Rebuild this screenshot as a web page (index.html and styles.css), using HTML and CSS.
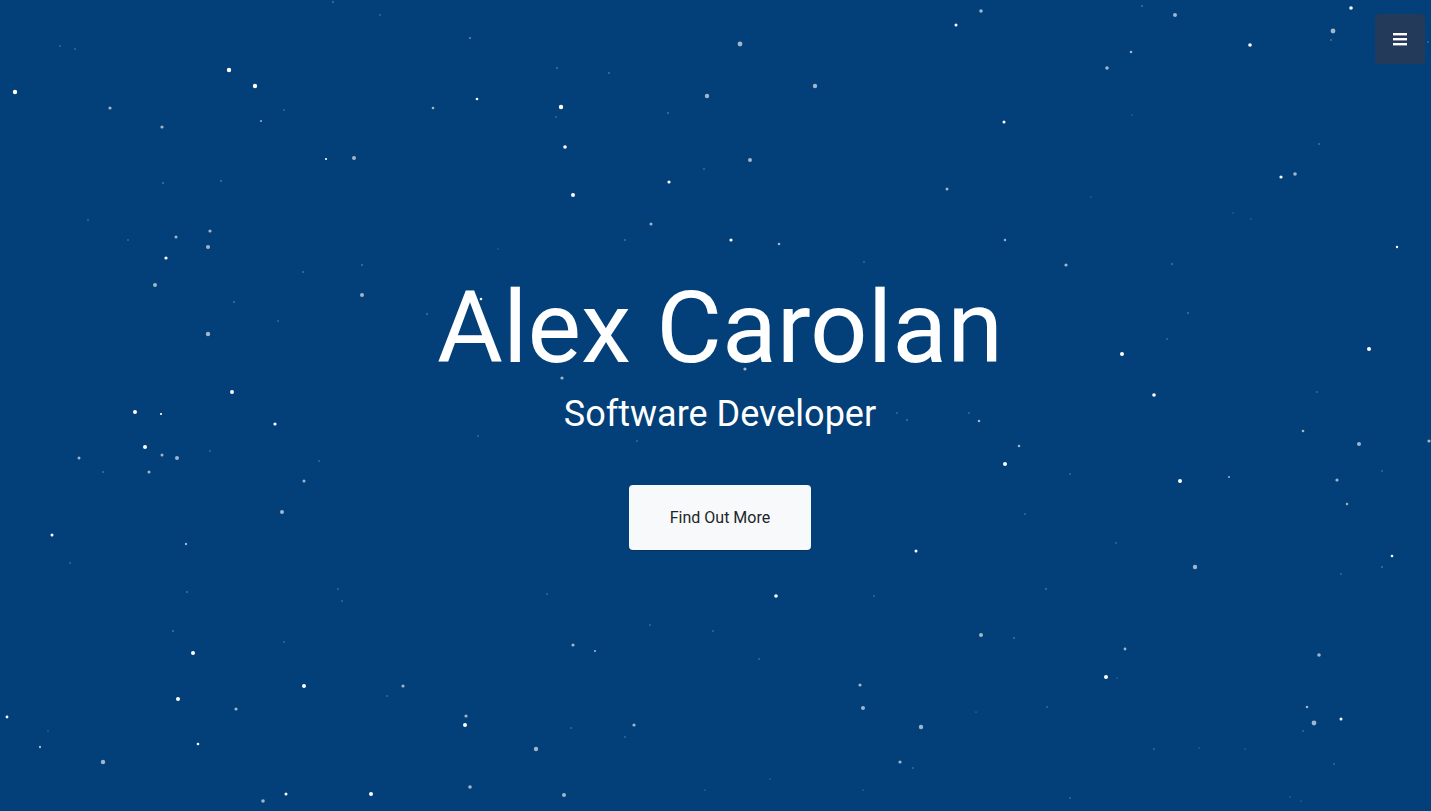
FILE: index.html
```html
<!DOCTYPE html>
<html lang="en">
<head>
<meta charset="utf-8">
<title>Alex Carolan</title>
<link rel="stylesheet" href="styles.css">
</head>
<body>
<header class="hero">
  <svg class="stars" viewBox="0 0 1431 811" width="1431" height="811" aria-hidden="true">
    <g class="bright">
      <circle cx="229" cy="70" r="2.2"/><circle cx="255" cy="86" r="2.2"/><circle cx="326" cy="159" r="1.1"/>
      <circle cx="166" cy="258" r="1.6"/><circle cx="477" cy="99" r="1.3"/><circle cx="561" cy="107" r="2.2"/>
      <circle cx="565" cy="147" r="1.8"/><circle cx="573" cy="195" r="2"/><circle cx="669" cy="182" r="1.6"/>
      <circle cx="731" cy="240" r="1.6"/><circle cx="956" cy="25" r="1.5"/><circle cx="1250" cy="45" r="1.8"/>
      <circle cx="1351" cy="8" r="1.8"/><circle cx="1004" cy="122" r="1.5"/><circle cx="1281" cy="177" r="1.6"/>
      <circle cx="1397" cy="247" r="1.2"/><circle cx="232" cy="392" r="2"/><circle cx="135" cy="412" r="2"/>
      <circle cx="275" cy="424" r="1.6"/><circle cx="145" cy="447" r="2"/><circle cx="52" cy="535" r="1.5"/>
      <circle cx="481" cy="299" r="1.3"/><circle cx="1122" cy="354" r="2"/><circle cx="1154" cy="395" r="1.8"/>
      <circle cx="1369" cy="349" r="2"/><circle cx="1005" cy="464" r="2"/><circle cx="1180" cy="481" r="2"/>
      <circle cx="193" cy="653" r="2"/><circle cx="304" cy="686" r="2"/><circle cx="178" cy="699" r="2"/>
      <circle cx="7" cy="717" r="1.4"/><circle cx="198" cy="744" r="1.3"/><circle cx="286" cy="794" r="1.5"/>
      <circle cx="371" cy="794" r="2"/><circle cx="465" cy="725" r="2"/><circle cx="916" cy="551" r="1.5"/>
      <circle cx="776" cy="596" r="1.8"/><circle cx="1392" cy="556" r="1.3"/><circle cx="1106" cy="677" r="2"/>
      <circle cx="1341" cy="719" r="1.5"/><circle cx="161" cy="414" r="1.1"/><circle cx="15" cy="92" r="2.2"/>
    </g>
    <g class="dim">
      <circle cx="110" cy="108" r="1.6"/><circle cx="162" cy="127" r="1.6"/><circle cx="261" cy="121" r="1"/>
      <circle cx="354" cy="158" r="2"/><circle cx="210" cy="231" r="1.6"/><circle cx="176" cy="237" r="1.5"/>
      <circle cx="208" cy="247" r="2"/><circle cx="433" cy="108" r="1.3"/><circle cx="740" cy="44" r="2.4"/>
      <circle cx="815" cy="86" r="2.2"/><circle cx="707" cy="96" r="2.2"/><circle cx="750" cy="160" r="2"/>
      <circle cx="651" cy="224" r="1.5"/><circle cx="779" cy="244" r="1.3"/><circle cx="947" cy="189" r="1.5"/>
      <circle cx="981" cy="11" r="1.8"/><circle cx="1175" cy="15" r="2"/><circle cx="1131" cy="52" r="1.3"/>
      <circle cx="1107" cy="68" r="1.8"/><circle cx="1333" cy="31" r="2.4"/><circle cx="1295" cy="174" r="1.8"/>
      <circle cx="1005" cy="240" r="1.2"/><circle cx="1066" cy="265" r="1.6"/><circle cx="155" cy="285" r="2"/>
      <circle cx="362" cy="295" r="2"/><circle cx="208" cy="334" r="2.2"/><circle cx="162" cy="455" r="1.5"/>
      <circle cx="177" cy="458" r="2"/><circle cx="79" cy="458" r="1.5"/><circle cx="149" cy="472" r="1.5"/>
      <circle cx="304" cy="481" r="1.5"/><circle cx="282" cy="512" r="2"/><circle cx="562" cy="378" r="1.6"/>
      <circle cx="745" cy="369" r="1.6"/><circle cx="979" cy="421" r="1.3"/><circle cx="1019" cy="446" r="1.3"/>
      <circle cx="1303" cy="431" r="1.3"/><circle cx="1359" cy="444" r="2"/><circle cx="1429" cy="441" r="1.6"/>
      <circle cx="1337" cy="480" r="1.6"/><circle cx="1347" cy="504" r="1.2"/><circle cx="236" cy="709" r="1.6"/>
      <circle cx="403" cy="686" r="1.6"/><circle cx="103" cy="762" r="2.2"/><circle cx="466" cy="716" r="1.6"/>
      <circle cx="263" cy="801" r="1.8"/><circle cx="470" cy="787" r="1.8"/><circle cx="573" cy="645" r="1.6"/>
      <circle cx="595" cy="651" r="1.1"/><circle cx="860" cy="685" r="1.6"/><circle cx="863" cy="708" r="2"/>
      <circle cx="921" cy="727" r="2.2"/><circle cx="900" cy="762" r="1.6"/><circle cx="634" cy="725" r="1.6"/>
      <circle cx="536" cy="749" r="2.2"/><circle cx="564" cy="795" r="2"/><circle cx="1195" cy="567" r="2.2"/>
      <circle cx="981" cy="635" r="2"/><circle cx="1125" cy="649" r="1.4"/><circle cx="1319" cy="655" r="1.8"/>
      <circle cx="1314" cy="723" r="2.4"/><circle cx="1307" cy="707" r="1.3"/><circle cx="40" cy="747" r="1.2"/>
      <circle cx="186" cy="544" r="1.2"/><circle cx="1229" cy="477" r="1"/>
    </g>
    <g class="faint">
      <circle cx="221" cy="181" r="0.8"/><circle cx="163" cy="183" r="0.8"/><circle cx="128" cy="240" r="0.7"/>
      <circle cx="88" cy="220" r="0.7"/><circle cx="470" cy="38" r="0.9"/><circle cx="284" cy="110" r="0.7"/>
      <circle cx="60" cy="46" r="0.7"/><circle cx="75" cy="49" r="0.7"/><circle cx="333" cy="2" r="0.8"/>
      <circle cx="380" cy="15" r="0.7"/><circle cx="362" cy="265" r="0.8"/><circle cx="303" cy="272" r="0.8"/>
      <circle cx="557" cy="68" r="0.8"/><circle cx="609" cy="73" r="0.8"/><circle cx="668" cy="113" r="0.8"/>
      <circle cx="556" cy="117" r="0.7"/><circle cx="704" cy="169" r="0.7"/><circle cx="625" cy="240" r="0.8"/>
      <circle cx="498" cy="249" r="0.6"/><circle cx="864" cy="262" r="0.7"/><circle cx="1142" cy="6" r="0.8"/>
      <circle cx="1331" cy="40" r="0.8"/><circle cx="1132" cy="115" r="0.6"/><circle cx="1319" cy="144" r="0.8"/>
      <circle cx="1172" cy="264" r="0.8"/><circle cx="1091" cy="197" r="0.6"/><circle cx="1233" cy="213" r="0.6"/>
      <circle cx="1251" cy="219" r="0.6"/><circle cx="234" cy="302" r="0.8"/><circle cx="278" cy="321" r="0.7"/>
      <circle cx="103" cy="472" r="0.8"/><circle cx="210" cy="451" r="0.7"/><circle cx="319" cy="461" r="0.7"/>
      <circle cx="427" cy="314" r="0.8"/><circle cx="478" cy="436" r="0.7"/><circle cx="637" cy="441" r="0.7"/>
      <circle cx="671" cy="416" r="0.8"/><circle cx="897" cy="413" r="0.7"/><circle cx="907" cy="420" r="0.8"/>
      <circle cx="1188" cy="313" r="0.8"/><circle cx="1167" cy="339" r="0.7"/><circle cx="1317" cy="392" r="0.7"/>
      <circle cx="969" cy="413" r="0.7"/><circle cx="1070" cy="474" r="0.7"/><circle cx="1382" cy="471" r="0.7"/>
      <circle cx="1025" cy="514" r="0.7"/><circle cx="70" cy="563" r="0.7"/><circle cx="187" cy="592" r="0.8"/>
      <circle cx="173" cy="631" r="0.8"/><circle cx="338" cy="589" r="0.7"/><circle cx="342" cy="601" r="0.7"/>
      <circle cx="284" cy="642" r="0.7"/><circle cx="387" cy="696" r="0.7"/><circle cx="48" cy="731" r="0.6"/>
      <circle cx="874" cy="596" r="0.7"/><circle cx="547" cy="594" r="0.7"/><circle cx="650" cy="625" r="0.7"/>
      <circle cx="713" cy="631" r="0.7"/><circle cx="759" cy="659" r="0.7"/><circle cx="913" cy="768" r="0.7"/>
      <circle cx="625" cy="737" r="0.7"/><circle cx="571" cy="728" r="0.7"/><circle cx="705" cy="790" r="0.6"/>
      <circle cx="770" cy="779" r="0.6"/><circle cx="863" cy="790" r="0.6"/><circle cx="1116" cy="543" r="0.7"/>
      <circle cx="1382" cy="567" r="0.8"/><circle cx="1341" cy="574" r="0.7"/><circle cx="1046" cy="589" r="0.8"/>
      <circle cx="1014" cy="638" r="0.8"/><circle cx="1117" cy="678" r="0.6"/><circle cx="1303" cy="731" r="0.7"/>
      <circle cx="976" cy="712" r="0.6"/><circle cx="1047" cy="707" r="0.7"/><circle cx="1154" cy="749" r="0.7"/>
      <circle cx="1199" cy="748" r="0.6"/><circle cx="1245" cy="749" r="0.6"/><circle cx="1334" cy="764" r="0.7"/>
      <circle cx="1070" cy="798" r="0.7"/><circle cx="1290" cy="797" r="0.6"/><circle cx="1301" cy="801" r="0.6"/>
      <circle cx="1428" cy="42" r="0.7"/>
    </g>
  </svg>

  <button class="menu-toggle" type="button" aria-label="Menu">
    <svg width="14" height="13" viewBox="0 0 14 13" aria-hidden="true">
      <rect x="0" y="0" width="14" height="2.4" fill="#fff"/>
      <rect x="0" y="5" width="14" height="2.4" fill="#fff"/>
      <rect x="0" y="10" width="14" height="2.4" fill="#fff"/>
    </svg>
  </button>

  <div class="hero-content">
    <h1 class="hero-title">Alex Carolan</h1>
    <h2 class="hero-subtitle">Software Developer</h2>
    <a class="hero-button" href="#about">Find Out More</a>
  </div>
</header>
</body>
</html>
```

FILE: styles.css
```css
* {
  box-sizing: border-box;
}

html,
body {
  margin: 0;
  padding: 0;
  height: 100%;
}

body {
  font-family: Roboto, "Liberation Sans", sans-serif;
  background: #033f78;
  overflow: hidden;
}

.hero {
  position: relative;
  width: 100%;
  height: 811px;
  background: #033f78;
  display: flex;
  align-items: center;
  justify-content: center;
  padding-left: 9px;
}

.stars {
  position: absolute;
  top: 0;
  left: 0;
  width: 100%;
  height: 100%;
}

.stars .bright circle {
  fill: #ffffff;
}

.stars .dim circle {
  fill: #ffffff;
  opacity: 0.62;
}

.stars .faint circle {
  fill: #ffffff;
  opacity: 0.45;
}

.menu-toggle {
  position: absolute;
  top: 14px;
  right: 6px;
  width: 50px;
  height: 50px;
  border: 0;
  border-radius: 5px;
  background: #243a5b;
  display: flex;
  align-items: center;
  justify-content: center;
  padding: 0;
  cursor: pointer;
}

.hero-content {
  position: relative;
  display: flex;
  flex-direction: column;
  align-items: center;
  text-align: center;
  color: #ffffff;
  margin-top: 6px;
}

.hero-title {
  margin: 0;
  font-size: 101px;
  font-weight: 400;
  line-height: 1.2;
  letter-spacing: 0;
}

.hero-subtitle {
  margin: 4px 0 0;
  font-size: 36px;
  font-weight: 400;
  line-height: 1.2;
}

.hero-button {
  margin-top: 49px;
  display: inline-block;
  padding: 20px 40.5px;
  font-size: 16px;
  line-height: 25px;
  color: #212529;
  background: #f8f9fa;
  border-radius: 4px;
  text-decoration: none;
  box-shadow: 0 1px 0 rgba(20, 40, 70, 0.6);
}
```
